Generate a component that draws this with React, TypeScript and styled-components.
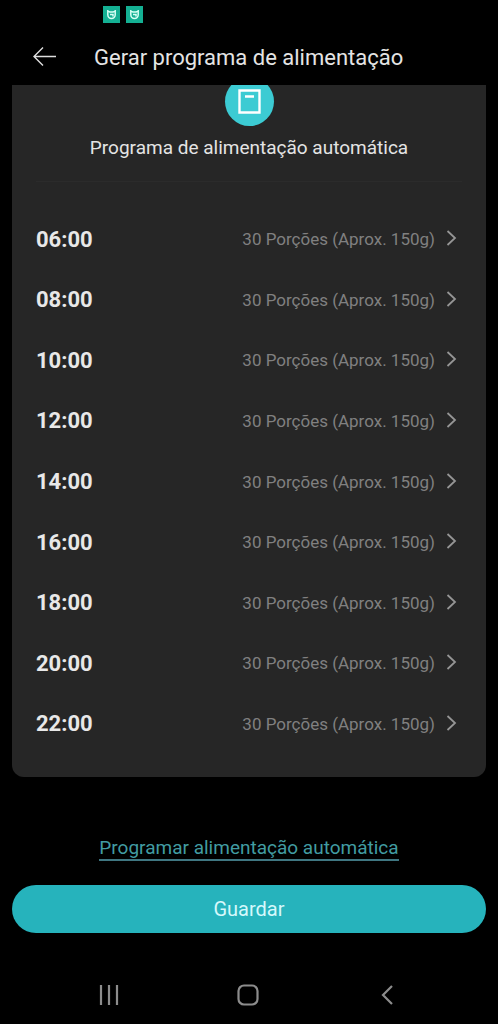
import React from 'react';
import styled, { createGlobalStyle } from 'styled-components';

const GlobalStyle = createGlobalStyle`
  * { box-sizing: border-box; }
  body {
    margin: 0;
    background: #000;
    color: #e4e4e4;
    font-family: Roboto, "Liberation Sans", sans-serif;
  }
  button { font: inherit; color: inherit; border: 0; padding: 0; background: none; cursor: pointer; }
  svg { display: block; fill: none; stroke: currentColor; }
`;

const Screen = styled.div`
  display: flex;
  flex-direction: column;
  min-height: 100vh;
`;

const StatusBar = styled.div`
  display: flex;
  gap: 6px;
  height: 29px;
  padding: 6px 0 0 103px;
`;

const AppBadge = styled.span`
  display: grid;
  place-items: center;
  width: 17px;
  height: 17px;
  background: #14b093;
  color: #d8fff5;
`;

const Header = styled.header`
  display: flex;
  align-items: center;
  gap: 36px;
  height: 56px;
  padding: 0 32px;
`;

const BackButton = styled.button`
  width: 26px;
  color: #dedede;
`;

const Title = styled.h1`
  margin: 0;
  padding-top: 2px;
  font-size: 22px;
  line-height: 28px;
  font-weight: 400;
`;

const Main = styled.main`
  display: flex;
  flex: 1;
  flex-direction: column;
  padding: 0 12px;
`;

const Card = styled.section`
  display: flex;
  flex: 1;
  flex-direction: column;
  padding: 0 24px 23px;
  border-radius: 0 0 12px 12px;
  background: #262626;
  overflow: hidden;
`;

const CardHead = styled.div`
  display: flex;
  flex-direction: column;
  align-items: center;
  gap: 10px;
  padding-bottom: 21px;
  border-bottom: 1px solid #2b2b2b;
`;

const FeederIcon = styled.span`
  display: grid;
  place-items: center;
  width: 49px;
  height: 49px;
  margin-top: -8px;
  border-radius: 50%;
  background: #3ccbd3;
  color: #fff;
`;

const CardTitle = styled.h2`
  margin: 0;
  font-size: 19px;
  line-height: 24px;
  font-weight: 400;
`;

const MealList = styled.ul`
  display: flex;
  flex: 1;
  flex-direction: column;
  margin: 27px 0 0;
  padding: 0;
  list-style: none;
`;

const MealItem = styled.li`
  display: flex;
  flex: 1;
`;

const MealButton = styled.button`
  display: flex;
  flex: 1;
  align-items: center;
  color: #808080;
`;

const Time = styled.span`
  margin-right: auto;
  color: #e8e8e8;
  font-size: 22px;
  font-weight: 700;
`;

const Portion = styled.span`
  margin-right: 10px;
  font-size: 17px;
`;

const Chevron = styled.svg`
  margin: 0 5px 2px 0;
  color: #959595;
`;

const Actions = styled.div`
  display: flex;
  flex-direction: column;
  align-items: center;
  gap: 24px;
  padding: 60px 0 33px;
`;

const ScheduleLink = styled.a`
  border-bottom: 2px solid #3f7681;
  color: #429ca2;
  font-size: 19px;
  line-height: 22px;
  text-decoration: none;
`;

const SaveButton = styled.button`
  align-self: stretch;
  height: 48px;
  border-radius: 24px;
  background: #26b3bc;
  color: #d5f8fb;
  font-size: 20px;
  line-height: 24px;
`;

const SystemNav = styled.nav`
  display: grid;
  grid-template-columns: repeat(3, 1fr);
  height: 58px;
  padding: 0 42px 0 39px;
  color: #8c8c8c;
`;

const NavButton = styled.button`
  display: grid;
  place-items: center;
`;

const times = ['06:00', '08:00', '10:00', '12:00', '14:00', '16:00', '18:00', '20:00', '22:00'];

const MiBadge = () => (
  <AppBadge>
    <svg width="11" height="11" viewBox="0 0 11 11" strokeWidth="1.5">
      <path d="M1.8 1v4.8a3.7 3.7 0 0 0 7.4 0V1M1.8 1.6l2 1.4h3.4l2-1.4M4 5.6h3v1.8" />
    </svg>
  </AppBadge>
);

export default function App() {
  return (
    <Screen>
      <GlobalStyle />
      <StatusBar>
        <MiBadge />
        <MiBadge />
      </StatusBar>
      <Header>
        <BackButton aria-label="Voltar">
          <svg width="26" height="20" viewBox="0 0 26 20" strokeWidth="1.4">
            <path d="M24 9.500H2M11 0.500L2 9.500l9 9" />
          </svg>
        </BackButton>
        <Title>Gerar programa de alimentação</Title>
      </Header>
      <Main>
        <Card>
          <CardHead>
            <FeederIcon>
              <svg width="23" height="25" viewBox="0 0 23 25" strokeWidth="2.4">
                <path d="M1.500 1.500h20v22h-20zM7 7.500h9" />
              </svg>
            </FeederIcon>
            <CardTitle>Programa de alimentação automática</CardTitle>
          </CardHead>
          <MealList>
            {times.map((time) => (
              <MealItem key={time}>
                <MealButton>
                  <Time>{time}</Time>
                  <Portion>30 Porções (Aprox. 150g)</Portion>
                  <Chevron width="12" height="16" viewBox="0 0 12 16" strokeWidth="1.8">
                    <path d="M2.500 1l7.500 7-7.500 7" />
                  </Chevron>
                </MealButton>
              </MealItem>
            ))}
          </MealList>
        </Card>
        <Actions>
          <ScheduleLink href="#programar">Programar alimentação automática</ScheduleLink>
          <SaveButton>Guardar</SaveButton>
        </Actions>
      </Main>
      <SystemNav>
        <NavButton aria-label="Recentes">
          <svg width="20" height="20" viewBox="0 0 20 20" strokeWidth="2.2">
            <path d="M2 0v20M10 0v20M18 0v20" />
          </svg>
        </NavButton>
        <NavButton aria-label="Início">
          <svg width="22" height="22" viewBox="0 0 22 22" strokeWidth="2.2">
            <rect x="1.5" y="1.5" width="19" height="19" rx="5.5" />
          </svg>
        </NavButton>
        <NavButton aria-label="Retroceder">
          <svg width="12" height="20" viewBox="0 0 12 20" strokeWidth="2.2">
            <path d="M11 1l-9 9 9 9" />
          </svg>
        </NavButton>
      </SystemNav>
    </Screen>
  );
}
